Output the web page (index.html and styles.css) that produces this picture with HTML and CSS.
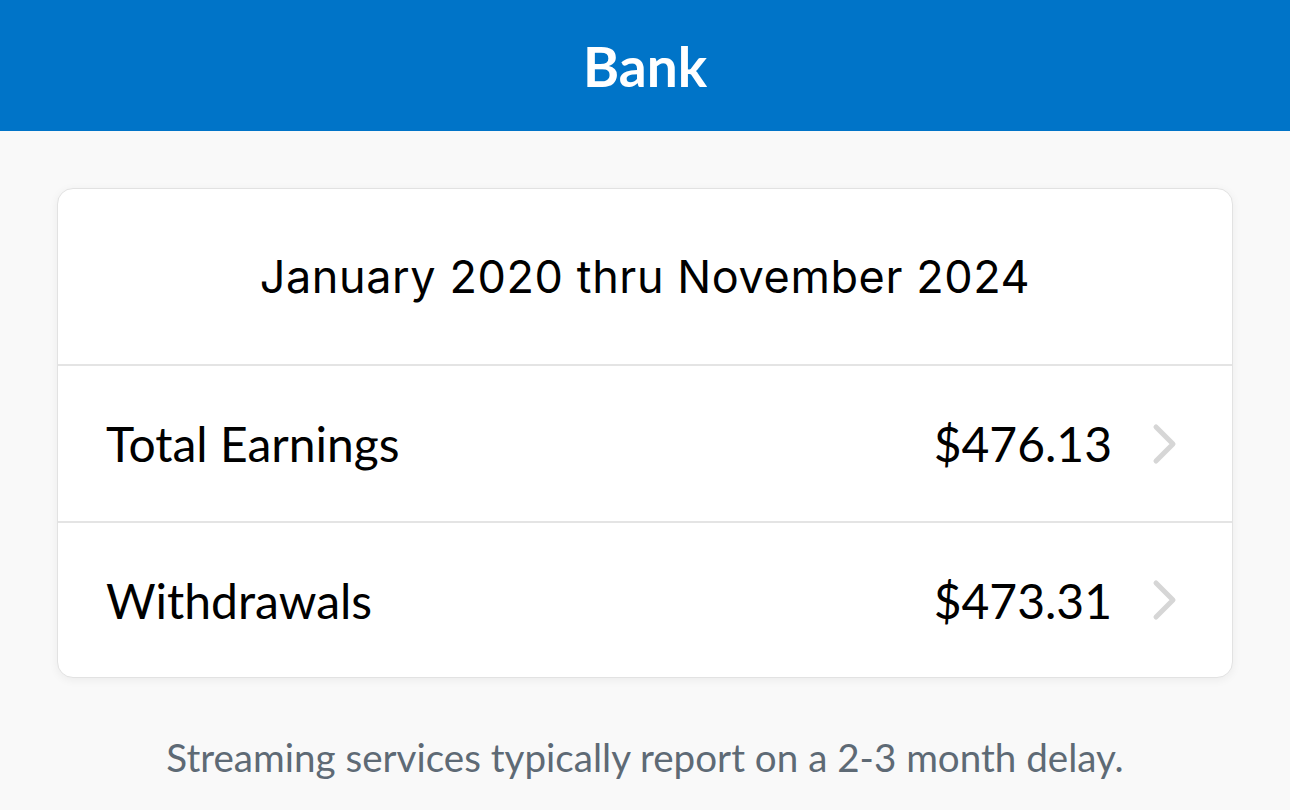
FILE: index.html
```html
<!DOCTYPE html>
<html>
<head>
<meta charset="utf-8">
<link rel="stylesheet" href="styles.css">
</head>
<body>
<header class="topbar"><h1 class="title">Bank</h1></header>
<main class="content">
  <section class="card">
    <div class="period">January 2020 thru November 2024</div>
    <div class="row">
      <span class="label">Total Earnings</span>
      <span class="amount">$476.13</span>
      <svg class="chev" viewBox="0 0 26 42" width="26" height="42"><path d="M4 4 L21 21 L4 38" fill="none" stroke="#d6d6d6" stroke-width="5" stroke-linecap="round" stroke-linejoin="round"/></svg>
    </div>
    <div class="row">
      <span class="label">Withdrawals</span>
      <span class="amount">$473.31</span>
      <svg class="chev" viewBox="0 0 26 42" width="26" height="42"><path d="M4 4 L21 21 L4 38" fill="none" stroke="#d6d6d6" stroke-width="5" stroke-linecap="round" stroke-linejoin="round"/></svg>
    </div>
  </section>
  <p class="note">Streaming services typically report on a 2-3 month delay.</p>
</main>
</body>
</html>
```
FILE: styles.css
```css
html, body { margin: 0; padding: 0; }
body {
  background: #f9f9f9;
  font-family: Lato, "Liberation Sans", sans-serif;
  width: 1290px;
  height: 810px;
  overflow: hidden;
}
.topbar {
  height: 131px;
  background: #0074c8;
  display: flex;
  align-items: center;
  justify-content: center;
}
.title {
  margin: 0;
  color: #fff;
  font-family: Lato, sans-serif;
  font-weight: 700;
  font-size: 55px;
  line-height: 1;
  padding-top: 2px;
}
.content {
  padding: 57px 57px 0;
}
.card {
  background: #fff;
  border: 1px solid #e2e2e2;
  border-radius: 16px;
  box-shadow: 0 2px 10px rgba(0,0,0,0.06);
  overflow: hidden;
}
.period {
  height: 175px;
  display: flex;
  align-items: center;
  justify-content: center;
  font-family: Inter, "Noto Sans", sans-serif;
  font-size: 45px;
  color: #000;
  border-bottom: 2px solid #e4e4e4;
  letter-spacing: 0.6px;
}
.row {
  height: 155px;
  display: flex;
  align-items: center;
  padding: 0 54px 0 48px;
  border-bottom: 2px solid #e4e4e4;
  font-size: 48px;
  color: #000;
}
.row:last-child { border-bottom: none; height: 154px; }
.label { flex: 1; }
.amount { margin-right: 40px; }
.chev { display: block; }
.note {
  margin: 56px 0 0;
  text-align: center;
  font-size: 38.6px;
  color: #5e6a75;
}
```
